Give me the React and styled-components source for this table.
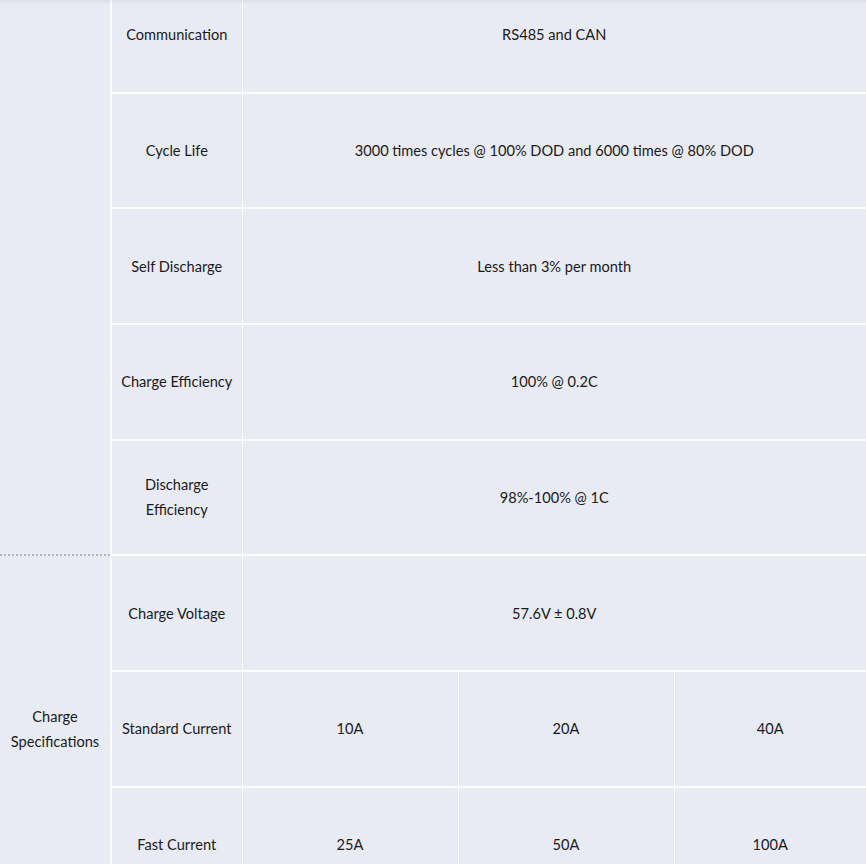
import styled, { createGlobalStyle } from 'styled-components';

const GlobalStyle = createGlobalStyle`
  html, body {
    margin: 0;
    padding: 0;
    background: #ffffff;
  }
  body {
    font-family: Lato, "Open Sans", sans-serif;
    color: #1a1a1a;
  }
`;

const rows = [
  { label: 'Communication', value: 'RS485 and CAN' },
  { label: 'Cycle Life', value: '3000 times cycles @ 100% DOD and 6000 times @ 80% DOD' },
  { label: 'Self Discharge', value: 'Less than 3% per month' },
  { label: 'Charge Efficiency', value: '100% @ 0.2C' },
  { label: 'Discharge Efficiency', value: '98%-100% @ 1C' },
];

const chargeRows = [
  { label: 'Charge Voltage', value: '57.6V ± 0.8V' },
  { label: 'Standard Current', values: ['10A', '20A', '40A'] },
  { label: 'Fast Current', values: ['25A', '50A', '100A'] },
];

function App() {
  return (
    <>
      <GlobalStyle />
      <Viewport>
        <SpecTable>
          <colgroup>
            <col style={{ width: 111 }} />
            <col style={{ width: 131 }} />
            <col style={{ width: 216 }} />
            <col style={{ width: 216 }} />
            <col />
          </colgroup>
          <tbody>
            {rows.map((row, i) => (
              <tr key={row.label}>
                {i === 0 && <GroupCell rowSpan={rows.length} $dashed />}
                <LabelCell>{row.label}</LabelCell>
                <ValueCell colSpan={3}>{row.value}</ValueCell>
              </tr>
            ))}
            {chargeRows.map((row, i) => (
              <tr key={row.label}>
                {i === 0 && (
                  <GroupCell rowSpan={chargeRows.length} $afterDashed>
                    Charge Specifications
                  </GroupCell>
                )}
                <LabelCell>{row.label}</LabelCell>
                {row.values ? (
                  row.values.map((v) => <ValueCell key={v}>{v}</ValueCell>)
                ) : (
                  <ValueCell colSpan={3}>{row.value}</ValueCell>
                )}
              </tr>
            ))}
          </tbody>
        </SpecTable>
      </Viewport>
    </>
  );
}

const Viewport = styled.div`
  position: relative;
  width: 866px;
  height: 864px;
  overflow: hidden;
  background: #e9ebf4;

  &::after {
    content: '';
    position: absolute;
    top: 0;
    left: 0;
    right: 0;
    height: 4px;
    background: linear-gradient(rgba(0, 0, 0, 0.06), rgba(0, 0, 0, 0));
    pointer-events: none;
  }
`;

const SpecTable = styled.table`
  width: 866px;
  margin-top: -24px;
  border-collapse: collapse;
  table-layout: fixed;
  font-size: 14.6px;
  line-height: 25px;
`;

const Cell = styled.td`
  height: 113.67px;
  padding: 0 8px;
  background: #e9ebf4;
  text-align: center;
  vertical-align: middle;
  border-top: 2px solid #ffffff;
  border-bottom: 2px solid #ffffff;
  border-left: 1px solid #ffffff;
  border-right: 1px solid #ffffff;
`;

const GroupCell = styled(Cell)`
  padding: 0 6px;
  border-left: none;
  border-right: 2px solid #ffffff;
  border-top: ${(p) => (p.$afterDashed ? 'none' : '2px solid #ffffff')};
  border-bottom: ${(p) => (p.$dashed ? '2px dotted #b4b4b4' : '2px solid #ffffff')};
`;

const LabelCell = styled(Cell)`
  padding: 0 8px;
`;

const ValueCell = styled(Cell)`
  &:last-child {
    border-right: none;
  }
`;

export default App;
